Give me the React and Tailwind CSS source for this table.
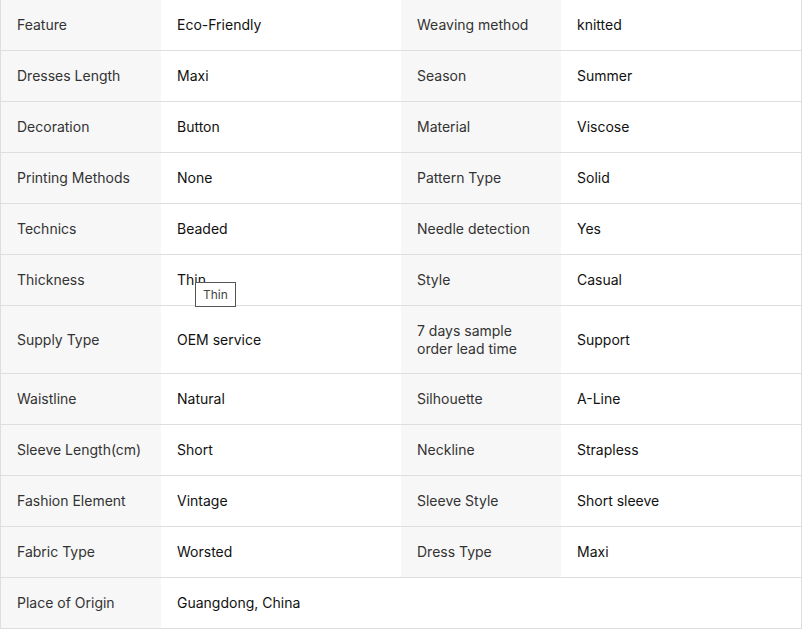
import React from "react";

const rows = [
  ["Feature", "Eco-Friendly", "Weaving method", "knitted"],
  ["Dresses Length", "Maxi", "Season", "Summer"],
  ["Decoration", "Button", "Material", "Viscose"],
  ["Printing Methods", "None", "Pattern Type", "Solid"],
  ["Technics", "Beaded", "Needle detection", "Yes"],
  ["Thickness", "Thin", "Style", "Casual"],
  ["Supply Type", "OEM service", "7 days sample order lead time", "Support"],
  ["Waistline", "Natural", "Silhouette", "A-Line"],
  ["Sleeve Length(cm)", "Short", "Neckline", "Strapless"],
  ["Fashion Element", "Vintage", "Sleeve Style", "Short sleeve"],
  ["Fabric Type", "Worsted", "Dress Type", "Maxi"],
];

function Label({ children }) {
  return (
    <div className="flex items-center bg-[#f7f7f7] px-4 text-[#333] leading-[18px]">
      <span className="max-w-[128px]">{children}</span>
    </div>
  );
}

function Value({ children }) {
  return (
    <div className="flex items-center bg-white px-4 text-[#111] leading-[18px]">
      {children}
    </div>
  );
}

export default function App() {
  return (
    <div className="bg-white w-[807px] h-[629px] overflow-hidden" style={{ fontFamily: "Inter, 'Noto Sans', sans-serif" }}>
      <div className="relative w-[802px] border-l border-r border-[#dedede] text-[14px]">
        {rows.map((r, i) => (
          <div
            key={i}
            className={`grid grid-cols-[160px_240px_160px_1fr] border-b border-[#dedede] ${
              r[0] === "Supply Type" ? "h-[68px]" : "h-[51px]"
            }`}
          >
            <Label>{r[0]}</Label>
            <Value>{r[1]}</Value>
            <Label>{r[2]}</Label>
            <Value>{r[3]}</Value>
          </div>
        ))}
        <div className="grid grid-cols-[160px_1fr] h-[51px] border-b border-[#dedede]">
          <Label>Place of Origin</Label>
          <Value>Guangdong, China</Value>
        </div>

        <div className="absolute left-[194px] top-[282px] border border-[#555] bg-white px-[7px] h-[25px] flex items-center text-[12px] text-[#444]">
          Thin
        </div>
      </div>
    </div>
  );
}
